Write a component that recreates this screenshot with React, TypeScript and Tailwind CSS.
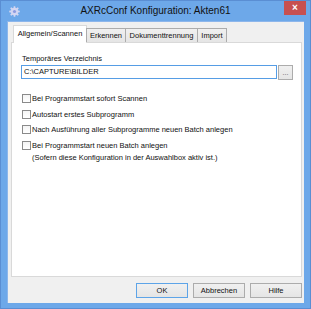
import React from "react";

const font = { fontFamily: '"Liberation Sans", Arial, sans-serif' };

function Gear() {
  return (
    <svg width="11" height="11" viewBox="0 0 24 24">
      <g fill="#D3D6F2">
        <circle cx="12" cy="12" r="8" />
        {[0, 45, 90, 135, 180, 225, 270, 315].map((a) => (
          <rect key={a} x="10" y="0.5" width="4" height="6" rx="1" transform={`rotate(${a} 12 12)`} />
        ))}
      </g>
      <circle cx="12" cy="12" r="3.5" fill="#8C9BE0" />
    </svg>
  );
}

function Check({ children }: { children: React.ReactNode }) {
  return (
    <div className="flex items-start h-[15.7px]">
      <div className="ml-[1px] mt-0 w-[9px] h-[9px] border border-[#8a8a8a] bg-gradient-to-b from-[#f4f4f4] to-white shrink-0" />
      <div className="ml-[1px] leading-[9px] text-[7.5px] text-[#111]">{children}</div>
    </div>
  );
}

export default function App() {
  return (
    <div style={font} className="w-[311px] h-[309px] bg-[#6DA8E9] border border-[#5A8ED3] flex flex-col">
      {/* title bar */}
      <div className="h-[20px] grid grid-cols-[1fr_auto_1fr] items-start shrink-0">
        <div className="pl-[8px] pt-[5px] flex">
          <Gear />
        </div>
        <div className="pt-[4px] text-[10px] leading-[12px] text-[#111] whitespace-nowrap">
          AXRcConf Konfiguration: Akten61
        </div>
        <div className="flex justify-end pr-[4px]">
          <div className="w-[22px] h-[14px] bg-[#C75050] flex items-center justify-center text-white text-[10px] font-bold leading-none">
            ×
          </div>
        </div>
      </div>
      {/* client */}
      <div className="mx-[6px] mb-[5px] flex-1 bg-[#F0F0F0] border-t border-l border-[#8DB6EB] pt-[3px] px-[3px] flex flex-col">
        {/* tabs */}
        <div className="h-[17px] flex items-end pl-[2px] relative z-10">
          <div className="w-[74px] h-[18px] mb-[-1px] bg-white border border-b-0 border-[#D9D9D9] text-[7.5px] leading-[9px] text-[#111] flex items-center justify-center pb-[2px]">
            Allgemein/Scannen
          </div>
          <div className="-ml-[1px] w-[40px] h-[14px] bg-gradient-to-b from-[#F0F0F0] to-[#E5E5E5] border border-b-0 border-[#ACACAC] text-[7.5px] leading-[9px] text-[#111] flex items-center justify-center">
            Erkennen
          </div>
          <div className="-ml-[1px] w-[73px] h-[14px] bg-gradient-to-b from-[#F0F0F0] to-[#E5E5E5] border border-b-0 border-[#ACACAC] text-[7.5px] leading-[9px] text-[#111] flex items-center justify-center">
            Dokumenttrennung
          </div>
          <div className="-ml-[1px] w-[30px] h-[14px] bg-gradient-to-b from-[#F0F0F0] to-[#E5E5E5] border border-b-0 border-[#ACACAC] text-[7.5px] leading-[9px] text-[#111] flex items-center justify-center">
            Import
          </div>
        </div>
        {/* panel */}
        <div className="w-[291px] h-[235px] bg-white border border-[#D9D9D9] pl-[9px] flex flex-col">
          <div className="pt-[11px] ml-[1px] text-[7.5px] leading-[9px] text-[#111]">Temporäres Verzeichnis</div>
          <div className="mt-[2px] flex gap-[1px]">
            <div className="w-[256px] h-[14px] border border-[#569DE5] bg-white pl-[2px] text-[7.5px] leading-[12px] text-[#111]">
              C:\CAPTURE\BILDER
            </div>
            <div className="w-[15px] h-[15px] border border-[#ACACAC] bg-gradient-to-b from-[#F0F0F0] to-[#E5E5E5] flex items-center justify-center text-[7px] leading-none text-[#555]">
              ...
            </div>
          </div>
          <div className="mt-[14px] flex flex-col">
            <Check>Bei Programmstart sofort Scannen</Check>
            <Check>Autostart erstes Subprogramm</Check>
            <Check>Nach Ausführung aller Subprogramme neuen Batch anlegen</Check>
            <div className="flex items-start">
              <div className="ml-[1px] w-[9px] h-[9px] border border-[#8a8a8a] bg-gradient-to-b from-[#f4f4f4] to-white shrink-0" />
              <div className="ml-[1px] text-[7.5px] leading-[12px] -mt-[1.5px] text-[#111]">
                <div>Bei Programmstart neuen Batch anlegen</div>
                <div>(Sofern diese Konfiguration in der Auswahlbox aktiv ist.)</div>
              </div>
            </div>
          </div>
        </div>
        {/* buttons */}
        <div className="mt-[6px] flex justify-end gap-[5px] w-[291px]">
          <div className="w-[52px] h-[15px] border border-[#5DA4E8] bg-gradient-to-b from-[#F0F0F0] to-[#E5E5E5] flex items-center justify-center text-[7.5px] leading-none text-[#111]">
            OK
          </div>
          <div className="w-[52px] h-[15px] border border-[#ACACAC] bg-gradient-to-b from-[#F0F0F0] to-[#E5E5E5] flex items-center justify-center text-[7.5px] leading-none text-[#111]">
            Abbrechen
          </div>
          <div className="w-[52px] h-[15px] border border-[#ACACAC] bg-gradient-to-b from-[#F0F0F0] to-[#E5E5E5] flex items-center justify-center text-[7.5px] leading-none text-[#111]">
            Hilfe
          </div>
        </div>
      </div>
    </div>
  );
}
